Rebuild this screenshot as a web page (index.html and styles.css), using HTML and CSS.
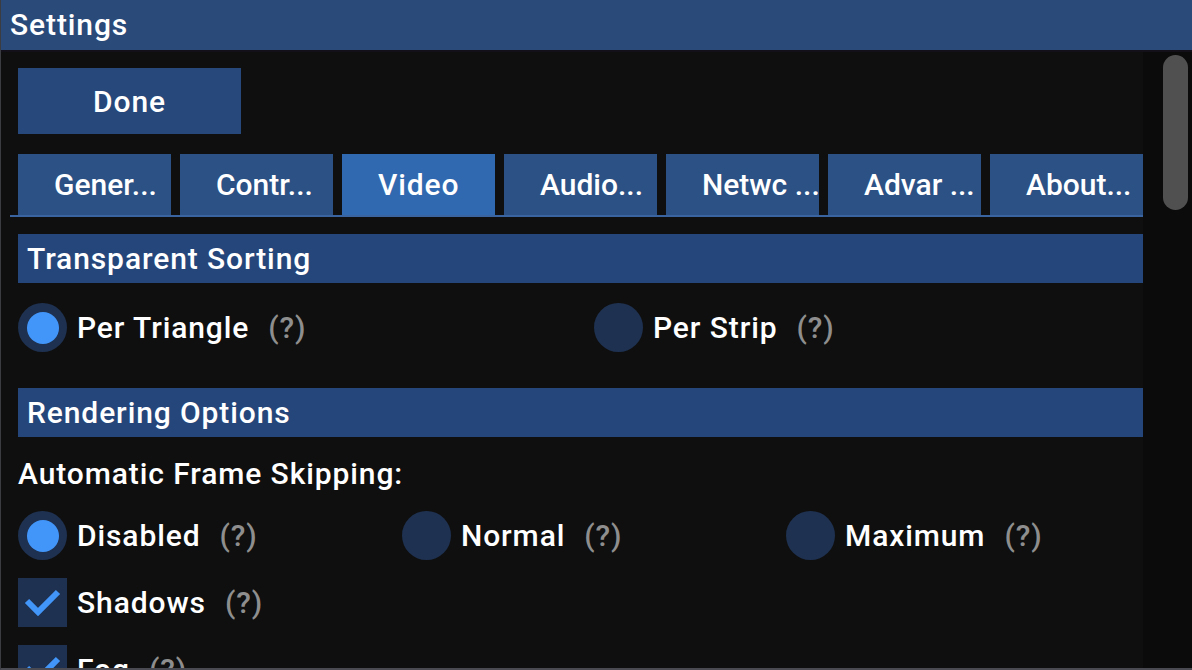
FILE: index.html
```html
<!DOCTYPE html>
<html lang="en">
<head>
    <meta charset="UTF-8">
    <meta name="viewport" content="width=device-width, initial-scale=1.0">
    <title>Settings</title>
    <link rel="stylesheet" href="styles.css">
</head>
<body>
    <div class="window">
        <div class="title-bar">Settings</div>
        <div class="window-body">
            <div class="content">
                <button class="btn btn-done">Done</button>

                <div class="tabs">
                    <div class="tab">Gener...</div>
                    <div class="tab">Contr...</div>
                    <div class="tab active">Video</div>
                    <div class="tab">Audio...</div>
                    <div class="tab">Netwc ...</div>
                    <div class="tab">Advar ...</div>
                    <div class="tab">About...</div>
                </div>
                <div class="tab-line"></div>

                <div class="section-header">Transparent Sorting</div>
                <div class="option-row two-cols">
                    <label class="radio checked"><span class="radio-dot"></span>Per Triangle<span class="help">(?)</span></label>
                    <label class="radio"><span class="radio-dot"></span>Per Strip<span class="help">(?)</span></label>
                </div>

                <div class="section-header spaced">Rendering Options</div>
                <div class="field-label">Automatic Frame Skipping:</div>
                <div class="option-row three-cols">
                    <label class="radio checked"><span class="radio-dot"></span>Disabled<span class="help">(?)</span></label>
                    <label class="radio"><span class="radio-dot"></span>Normal<span class="help">(?)</span></label>
                    <label class="radio"><span class="radio-dot"></span>Maximum<span class="help">(?)</span></label>
                </div>

                <label class="checkbox">
                    <span class="check-box">
                        <svg viewBox="0 0 49 49" width="49" height="49"><path d="M9 23 L20 34 L40 14" fill="none" stroke="#4296fa" stroke-width="6"/></svg>
                    </span>Shadows<span class="help">(?)</span>
                </label>
                <label class="checkbox">
                    <span class="check-box">
                        <svg viewBox="0 0 49 49" width="49" height="49"><path d="M9 23 L20 34 L40 14" fill="none" stroke="#4296fa" stroke-width="6"/></svg>
                    </span>Fog<span class="help">(?)</span>
                </label>
            </div>

            <div class="scrollbar">
                <div class="scroll-thumb"></div>
            </div>
        </div>
    </div>
</body>
</html>
```

FILE: styles.css
```css
html, body {
    margin: 0;
    padding: 0;
    background: #0f0f0f;
    overflow: hidden;
}

body {
    font-family: Roboto, "Liberation Sans", sans-serif;
    font-weight: 500;
    font-size: 30px;
    letter-spacing: 0.9px;
    color: #ffffff;
}

.window {
    width: 1192px;
    height: 670px;
    display: flex;
    flex-direction: column;
    box-sizing: border-box;
    border-left: 1px solid #3b3b42;
    border-bottom: 2px solid #4a4a52;
    overflow: hidden;
}

.title-bar {
    height: 50px;
    line-height: 50px;
    padding-left: 9px;
    background-color: #2a4a7a;
    border-bottom: 2px solid #14101a;
    flex-shrink: 0;
}

.window-body {
    flex: 1;
    display: flex;
    min-height: 0;
}

.content {
    width: 1125px;
    padding: 16px 0 0 17px;
    display: flex;
    flex-direction: column;
    align-items: flex-start;
}

.content > * {
    flex-shrink: 0;
}

.btn {
    font: inherit;
    letter-spacing: inherit;
    color: inherit;
    border: none;
    padding: 0;
    cursor: pointer;
}

.btn-done {
    width: 223px;
    height: 66px;
    background-color: #26487a;
}

.tabs {
    margin-top: 20px;
    display: flex;
    gap: 9px;
}

.tab {
    width: 117px;
    height: 61px;
    line-height: 62px;
    padding-left: 36px;
    background-color: #2b5185;
    letter-spacing: 0;
    white-space: nowrap;
    overflow: hidden;
}

.tab.active {
    background-color: #3169b0;
    letter-spacing: 0.9px;
}

.tab-line {
    width: 1141px;
    height: 2px;
    margin-left: -8px;
    background-color: #3a64a0;
}

.section-header {
    width: 1116px;
    height: 49px;
    line-height: 50px;
    padding-left: 9px;
    margin-top: 17px;
    background-color: #25467a;
}

.section-header.spaced {
    margin-top: 36px;
}

.option-row {
    margin-top: 20px;
    display: grid;
    height: 49px;
}

.two-cols {
    grid-template-columns: 576px 576px;
}

.three-cols {
    grid-template-columns: 384px 384px 384px;
}

.radio, .checkbox {
    display: flex;
    align-items: center;
    height: 49px;
}

.radio-dot {
    width: 49px;
    height: 49px;
    border-radius: 50%;
    background-color: #1e3150;
    margin-right: 10px;
    display: flex;
    align-items: center;
    justify-content: center;
    flex-shrink: 0;
}

.radio.checked .radio-dot::after {
    content: "";
    width: 32px;
    height: 32px;
    border-radius: 50%;
    background-color: #4296fa;
}

.help {
    margin-left: 19px;
    color: #8e8e8e;
}

.field-label {
    margin-top: 20px;
    height: 34px;
    line-height: 34px;
}

.checkbox {
    margin-top: 18px;
}

.check-box {
    width: 49px;
    height: 49px;
    margin-right: 10px;
    background-color: #1e3150;
    flex-shrink: 0;
}

.check-box svg {
    display: block;
}

.scrollbar {
    flex: 1;
    background-color: #0b0b0b;
    padding: 3px 0 0 20px;
}

.scroll-thumb {
    width: 25px;
    height: 155px;
    border-radius: 13px;
    background-color: #505050;
}
```
